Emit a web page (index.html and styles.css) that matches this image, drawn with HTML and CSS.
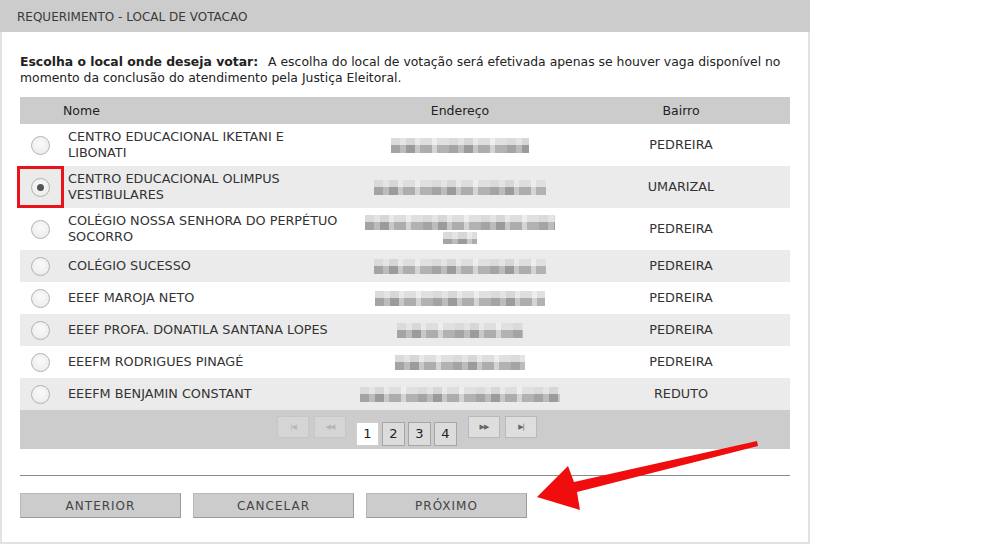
FILE: index.html
```html
<!DOCTYPE html>
<html lang="pt-BR">
<head>
  <meta charset="UTF-8" />
  <title>Requerimento - Local de Votacao</title>
  <link rel="stylesheet" href="styles.css">
</head>
<body>

  <div class="panel">
    <div class="panel-title">REQUERIMENTO - LOCAL DE VOTACAO</div>

    <div class="panel-body">
      <p class="intro"><strong>Escolha o local onde deseja votar:</strong> A escolha do local de votação será efetivada apenas se houver vaga disponível no
        momento da conclusão do atendimento pela Justiça Eleitoral.</p>

      <table class="places">
        <thead>
          <tr>
            <th class="col-radio"></th>
            <th class="col-name">Nome</th>
            <th class="col-addr">Endereço</th>
            <th class="col-district">Bairro</th>
          </tr>
        </thead>
        <tbody>
          <tr>
            <td class="col-radio"><span class="radio"></span></td>
            <td class="col-name">CENTRO EDUCACIONAL IKETANI E<br>LIBONATI</td>
            <td class="col-addr"><span class="blur" style="width:138px"></span></td>
            <td class="col-district">PEDREIRA</td>
          </tr>
          <tr>
            <td class="col-radio">
              <span class="radio checked"></span>
              <span class="mark"></span>
            </td>
            <td class="col-name">CENTRO EDUCACIONAL OLIMPUS<br>VESTIBULARES</td>
            <td class="col-addr"><span class="blur" style="width:172px"></span></td>
            <td class="col-district">UMARIZAL</td>
          </tr>
          <tr>
            <td class="col-radio"><span class="radio"></span></td>
            <td class="col-name">COLÉGIO NOSSA SENHORA DO PERPÉTUO<br>SOCORRO</td>
            <td class="col-addr">
              <span class="blur" style="width:190px"></span>
              <span class="blur" style="width:34px"></span>
            </td>
            <td class="col-district">PEDREIRA</td>
          </tr>
          <tr>
            <td class="col-radio"><span class="radio"></span></td>
            <td class="col-name">COLÉGIO SUCESSO</td>
            <td class="col-addr"><span class="blur" style="width:172px"></span></td>
            <td class="col-district">PEDREIRA</td>
          </tr>
          <tr>
            <td class="col-radio"><span class="radio"></span></td>
            <td class="col-name">EEEF MAROJA NETO</td>
            <td class="col-addr"><span class="blur" style="width:170px"></span></td>
            <td class="col-district">PEDREIRA</td>
          </tr>
          <tr>
            <td class="col-radio"><span class="radio"></span></td>
            <td class="col-name">EEEF PROFA. DONATILA SANTANA LOPES</td>
            <td class="col-addr"><span class="blur" style="width:126px"></span></td>
            <td class="col-district">PEDREIRA</td>
          </tr>
          <tr>
            <td class="col-radio"><span class="radio"></span></td>
            <td class="col-name">EEEFM RODRIGUES PINAGÉ</td>
            <td class="col-addr"><span class="blur" style="width:130px"></span></td>
            <td class="col-district">PEDREIRA</td>
          </tr>
          <tr>
            <td class="col-radio"><span class="radio"></span></td>
            <td class="col-name">EEEFM BENJAMIN CONSTANT</td>
            <td class="col-addr"><span class="blur" style="width:200px"></span></td>
            <td class="col-district">REDUTO</td>
          </tr>
        </tbody>
        <tfoot>
          <tr>
            <td colspan="4">
              <div class="pager">
                <span class="nav disabled">|&#9664;</span>
                <span class="nav disabled">&#9664;&#9664;</span>
                <span class="pages">
                  <span class="page current">1</span>
                  <span class="page">2</span>
                  <span class="page">3</span>
                  <span class="page">4</span>
                </span>
                <span class="nav">&#9654;&#9654;</span>
                <span class="nav">&#9654;|</span>
              </div>
            </td>
          </tr>
        </tfoot>
      </table>

      <hr class="divider">

      <div class="actions">
        <button type="button" class="btn">ANTERIOR</button>
        <button type="button" class="btn">CANCELAR</button>
        <button type="button" class="btn">PRÓXIMO</button>
      </div>
    </div>
  </div>

  <svg class="arrow" width="240" height="80" viewBox="530 440 240 80">
    <polygon points="537,497 568,466 574,482 757,441 758,446 577,492 580,510" fill="#f00d0d" />
  </svg>

</body>
</html>
```

FILE: styles.css
```css
:root {
  --bar: #cccccc;
  --row-alt: #ebebeb;
  --text: #333333;
  --border: #e2e2e2;
}

body {
  margin: 0;
  background-color: #ffffff;
  color: var(--text);
  font-family: "DejaVu Sans", Verdana, sans-serif;
  font-size: 12px;
  position: relative;
}

.panel {
  width: 810px;
  height: 544px;
  box-sizing: border-box;
  border: 2px solid var(--border);
  border-top: none;
}

.panel-title {
  background-color: var(--bar);
  height: 32px;
  line-height: 34px;
  padding-left: 17px;
  margin: 0 -2px;
  color: #3a3a3a;
}

.panel-body {
  padding: 0 18px;
}

.intro {
  margin: 22px 0 11px;
  line-height: 16px;
  font-size: 12.4px;
  color: #222;
  word-spacing: 0;
}

.intro strong {
  font-weight: bold;
  padding-right: 6px;
}

.places {
  width: 770px;
  border-collapse: collapse;
}

.places th {
  background-color: var(--bar);
  height: 27px;
  padding: 0;
  font-weight: normal;
  color: #222;
  font-size: 12.5px;
}

.places tbody tr {
  height: 32px;
}

.places tbody tr:nth-child(even) {
  background-color: var(--row-alt);
}

.places td {
  padding: 5px 0;
  line-height: 16px;
  vertical-align: middle;
  font-size: 12.8px;
}

.col-radio {
  width: 40px;
  text-align: center;
  position: relative;
}

.places .col-name {
  width: 280px;
  padding-left: 8px;
  text-align: left;
  white-space: nowrap;
}

.places th.col-name {
  padding-left: 3px;
}

.col-addr {
  width: 224px;
  text-align: center;
}

.col-district {
  text-align: center;
}

.radio {
  display: inline-block;
  width: 17px;
  height: 17px;
  border: 1px solid #b3b3b3;
  border-radius: 50%;
  background: radial-gradient(circle at 50% 40%, #fafafa 0, #eeeeee 70%, #e2e2e2 100%);
  vertical-align: middle;
  position: relative;
}

.radio.checked::after {
  content: "";
  position: absolute;
  left: 5px;
  top: 5px;
  width: 7px;
  height: 7px;
  border-radius: 50%;
  background-color: #555;
}

.mark {
  position: absolute;
  left: -3px;
  top: 0;
  width: 47px;
  height: 42px;
  border: 3px solid #e8141b;
  box-sizing: border-box;
}

.blur {
  display: block;
  margin: 0 auto;
  height: 15px;
  background-image:
    linear-gradient(to bottom, rgba(255, 255, 255, 0.6) 0 7px, transparent 7px 15px),
    repeating-linear-gradient(90deg, #a4a4a4 0 9px, #bcbcbc 9px 15px, #9b9b9b 15px 24px, #c8c8c8 24px 29px, #adadad 29px 41px, #d4d4d4 41px 46px, #b2b2b2 46px 58px);
}

.blur + .blur {
  margin-top: 2px;
  height: 12px;
}

.places tfoot td {
  background-color: var(--bar);
  height: 39px;
  padding: 0;
}

.pager {
  display: flex;
  align-items: flex-start;
  padding: 4px 0 0 257px;
  height: 35px;
  box-sizing: border-box;
}

.nav {
  width: 30px;
  height: 20px;
  line-height: 20px;
  margin-right: 5px;
  border: 1px solid #b9b9b9;
  background-color: #dedede;
  color: #666;
  font-size: 7px;
  text-align: center;
  letter-spacing: -1px;
}

.nav.disabled {
  color: #b5b5b5;
  border-color: #c6c6c6;
  background-color: #d5d5d5;
}

.pages {
  display: flex;
  gap: 3px;
  margin: 6px 11px 0 5px;
}

.page {
  width: 21px;
  height: 22px;
  line-height: 22px;
  text-align: center;
  border: 1px solid #a6a6a6;
  background-color: #dcdcdc;
  color: #222;
  font-size: 13px;
}

.page.current {
  background-color: #ffffff;
  border-color: #cfcfcf;
}

.divider {
  margin: 26px 0 17px;
  border: none;
  border-top: 1px solid #8a8a8a;
  height: 0;
}

.actions {
  display: flex;
  gap: 12px;
}

.btn {
  width: 161px;
  height: 25px;
  background-color: var(--bar);
  border: 1px solid #9a9a9a;
  border-top-color: #b8b8b8;
  border-left-color: #b8b8b8;
  font-family: "DejaVu Sans", Verdana, sans-serif;
  font-size: 12px;
  letter-spacing: 1px;
  color: #444;
  padding: 0;
}

.arrow {
  position: absolute;
  left: 530px;
  top: 440px;
}
```
